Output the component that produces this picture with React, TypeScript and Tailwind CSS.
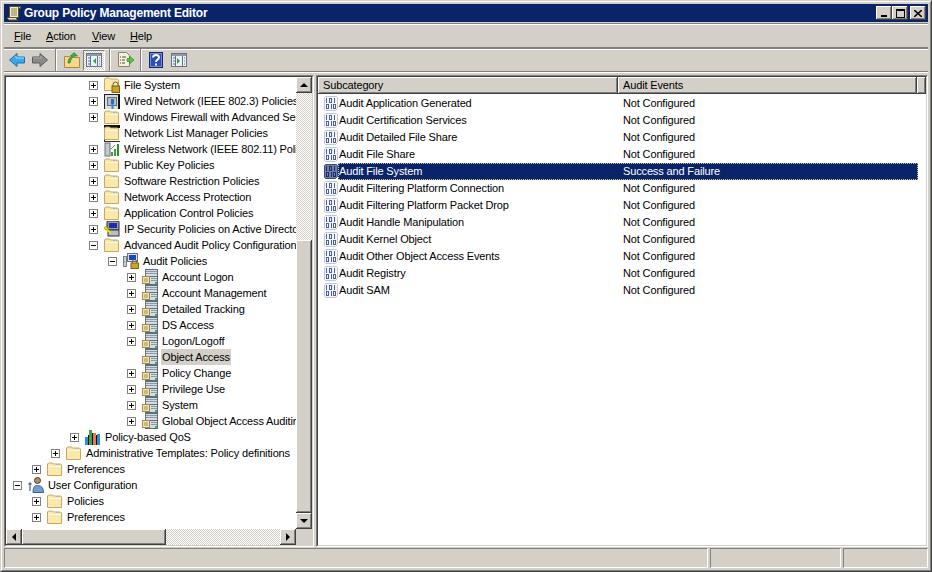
import React from "react";

const raised =
  "shadow-[inset_-1px_-1px_0_#404040,inset_1px_1px_0_#ffffff,inset_-2px_-2px_0_#808080]";
const checker =
  "bg-[repeating-conic-gradient(#d4d0c8_0_25%,#ffffff_0_50%)] bg-[length:2px_2px]";

const Folder = () => (
  <svg width="16" height="16" viewBox="0 0 16 16" className="shrink-0">
    <path d="M0.5 14.5V3l1-1h4l1 1h7l1 1v10.5z" fill="#fbe9ac" stroke="#c8a860" />
    <path d="M1.5 5.5h12.5" stroke="#fff8da" />
    <path d="M9 3h4v1H9z" fill="#9fc0d8" />
  </svg>
);

const LockFolder = () => (
  <svg width="16" height="16" viewBox="0 0 16 16" className="shrink-0">
    <path d="M0.5 13.5V2l1-1h4l1 1h7l1 1v10.5z" fill="#fbe9ac" stroke="#c8a860" />
    <path d="M9 9V7.5a2.5 2.5 0 0 1 5 0V9" fill="none" stroke="#6b5a20" />
    <rect x="8" y="9" width="7.5" height="6.5" fill="#c9a227" stroke="#7a6210" />
  </svg>
);

const BlackFolder = () => (
  <svg width="16" height="16" viewBox="0 0 16 16" className="shrink-0">
    <path d="M0 0h16v3H1v13H0z" fill="#111" />
    <path d="M0.5 14.5V3l1-1h4l1 1h7l1 1v10.5z" fill="#fbe9ac" stroke="#c8a860" />
    <path d="M1.5 5.5h12.5" stroke="#fff8da" />
  </svg>
);

const Wired = () => (
  <svg width="16" height="16" viewBox="0 0 16 16" className="shrink-0">
    <rect x="0" y="1" width="16" height="15" fill="#d8dde2" />
    <path d="M0 1h16v1H1v14H0z" fill="#222" />
    <path d="M14 2h2v14h-2z" fill="#111" />
    <rect x="3.5" y="4.5" width="9" height="8" fill="#b4bcc4" stroke="#6a7078" />
    <rect x="7" y="6" width="3" height="5" fill="#2a6fb5" />
    <path d="M8.5 11v5" stroke="#3d86c8" strokeWidth="2" />
  </svg>
);

const Wireless = () => (
  <svg width="16" height="16" viewBox="0 0 16 16" className="shrink-0">
    <rect x="1" y="2" width="5" height="13" fill="#c3cbd2" stroke="#6a7078" />
    <path d="M0 0h16v1H0z" fill="#333" />
    <rect x="7" y="11" width="2" height="4" fill="#3aa23a" />
    <rect x="10" y="8" width="2" height="7" fill="#3aa23a" />
    <rect x="13" y="3" width="2" height="12" fill="#2f8f2f" />
    <path d="M7 8l4-4" stroke="#7a7a7a" />
  </svg>
);

const Ipsec = () => (
  <svg width="16" height="16" viewBox="0 0 16 16" className="shrink-0">
    <rect x="3" y="0" width="12" height="9" rx="1" fill="#9aa0a8" stroke="#222" />
    <rect x="5" y="2" width="8" height="5" fill="#1c2bb0" />
    <rect x="4" y="9" width="11" height="6" fill="#b9bec4" stroke="#333" />
    <path d="M1 7l6 5" stroke="#f2e200" strokeWidth="2" />
    <circle cx="2" cy="7" r="1.6" fill="#f2e200" stroke="#8a7f00" strokeWidth=".5" />
  </svg>
);

const AuditPolicies = () => (
  <svg width="16" height="16" viewBox="0 0 16 16" className="shrink-0">
    <rect x="0.5" y="3.5" width="3" height="10" fill="#c9ced4" stroke="#7c828a" />
    <rect x="1" y="8" width="1" height="1" fill="#2fc22f" />
    <rect x="4.5" y="0.5" width="10" height="8" fill="#dfe3e8" stroke="#6a7078" />
    <rect x="6" y="2" width="7" height="5" fill="#1546c8" />
    <path d="M9.5 10V8.5a2 2 0 0 1 4 0V10" fill="none" stroke="#6b5a20" />
    <rect x="8" y="10" width="7.5" height="5.5" fill="#cda52a" stroke="#7a6210" />
  </svg>
);

const Servers = () => (
  <svg width="16" height="16" viewBox="0 0 16 16" className="shrink-0">
    <rect x="3.5" y="0.5" width="12" height="7" fill="#d3dbe5" stroke="#5f6c7a" />
    <rect x="3.5" y="7.5" width="12" height="8" fill="#d3dbe5" stroke="#5f6c7a" />
    <path d="M4 2.5h11M4 4.5h11M9 9.500h6M9 11.500h6" stroke="#8b98a8" />
    <rect x="13" y="13" width="2" height="2" fill="#2fc22f" />
    <rect x="0.5" y="7.5" width="7" height="7" fill="#f5e3ac" stroke="#a08a50" />
    <path d="M2 10h4M2 12h4" stroke="#a08a50" />
  </svg>
);

const Qos = () => (
  <svg width="16" height="16" viewBox="0 0 16 16" className="shrink-0">
    <rect x="0" y="8" width="3" height="8" fill="#2a8fe0" />
    <rect x="3" y="6" width="1" height="10" fill="#111" />
    <rect x="4" y="1" width="3" height="15" fill="#37a84a" />
    <rect x="7" y="4" width="1" height="12" fill="#111" />
    <rect x="8" y="4" width="3" height="12" fill="#f0764a" />
    <rect x="11" y="6" width="1" height="10" fill="#111" />
    <rect x="12" y="5" width="3" height="11" fill="#2a8fe0" />
  </svg>
);

const UserCfg = () => (
  <svg width="16" height="16" viewBox="0 0 16 16" className="shrink-0">
    <circle cx="9.5" cy="3.5" r="3" fill="#b98a60" stroke="#4a3a2a" />
    <path d="M5 15.5c0-6 2-7 4.500-7s6 1 6 7z" fill="#6f9fd2" stroke="#3a5f8a" />
    <path d="M2 6v8M0.5 7.5L2 6l1.5 1.5" fill="none" stroke="#5a6f8a" strokeWidth="1.3" />
  </svg>
);

const BinDoc = ({ selected }: { selected?: boolean }) => (
  <svg width="14" height="16" viewBox="0 0 14 16" className="shrink-0">
    <path
      d="M1.5 0.5h11l1 1v11l-2 2h-10l-1-1v-12z"
      fill={selected ? "#6f7fa8" : "#f6f7fb"}
      stroke={selected ? "#3a4a7a" : "#c0c6d4"}
    />
    <g fill={selected ? "#1a2a6a" : "#4a5cb0"}>
      <rect x="2" y="2" width="1" height="5" />
      <rect x="5" y="2" width="3" height="5" />
      <rect x="10" y="2" width="1" height="5" />
      <rect x="2" y="8" width="3" height="5" />
      <rect x="7" y="8" width="1" height="5" />
      <rect x="9" y="8" width="3" height="5" />
    </g>
    <g fill={selected ? "#6f7fa8" : "#f6f7fb"}>
      <rect x="6" y="3" width="1" height="3" />
      <rect x="3" y="9" width="1" height="3" />
      <rect x="10" y="9" width="1" height="3" />
    </g>
  </svg>
);

const icons: Record<string, React.ReactNode> = {
  folder: <Folder />,
  lock: <LockFolder />,
  black: <BlackFolder />,
  wired: <Wired />,
  wireless: <Wireless />,
  ipsec: <Ipsec />,
  audit: <AuditPolicies />,
  servers: <Servers />,
  qos: <Qos />,
  user: <UserCfg />,
};

type Row = { label: string; depth: number; icon: string; box?: "+" | "-"; hl?: boolean };

const tree: Row[] = [
  { label: "File System", depth: 4, icon: "lock", box: "+" },
  { label: "Wired Network (IEEE 802.3) Policies", depth: 4, icon: "wired", box: "+" },
  { label: "Windows Firewall with Advanced Security", depth: 4, icon: "folder", box: "+" },
  { label: "Network List Manager Policies", depth: 4, icon: "black" },
  { label: "Wireless Network (IEEE 802.11) Policies", depth: 4, icon: "wireless", box: "+" },
  { label: "Public Key Policies", depth: 4, icon: "folder", box: "+" },
  { label: "Software Restriction Policies", depth: 4, icon: "folder", box: "+" },
  { label: "Network Access Protection", depth: 4, icon: "folder", box: "+" },
  { label: "Application Control Policies", depth: 4, icon: "folder", box: "+" },
  { label: "IP Security Policies on Active Directory", depth: 4, icon: "ipsec", box: "+" },
  { label: "Advanced Audit Policy Configuration", depth: 4, icon: "folder", box: "-" },
  { label: "Audit Policies", depth: 5, icon: "audit", box: "-" },
  { label: "Account Logon", depth: 6, icon: "servers", box: "+" },
  { label: "Account Management", depth: 6, icon: "servers", box: "+" },
  { label: "Detailed Tracking", depth: 6, icon: "servers", box: "+" },
  { label: "DS Access", depth: 6, icon: "servers", box: "+" },
  { label: "Logon/Logoff", depth: 6, icon: "servers", box: "+" },
  { label: "Object Access", depth: 6, icon: "servers", hl: true },
  { label: "Policy Change", depth: 6, icon: "servers", box: "+" },
  { label: "Privilege Use", depth: 6, icon: "servers", box: "+" },
  { label: "System", depth: 6, icon: "servers", box: "+" },
  { label: "Global Object Access Auditing", depth: 6, icon: "servers", box: "+" },
  { label: "Policy-based QoS", depth: 3, icon: "qos", box: "+" },
  { label: "Administrative Templates: Policy definitions", depth: 2, icon: "folder", box: "+" },
  { label: "Preferences", depth: 1, icon: "folder", box: "+" },
  { label: "User Configuration", depth: 0, icon: "user", box: "-" },
  { label: "Policies", depth: 1, icon: "folder", box: "+" },
  { label: "Preferences", depth: 1, icon: "folder", box: "+" },
];

const audits: [string, string][] = [
  ["Audit Application Generated", "Not Configured"],
  ["Audit Certification Services", "Not Configured"],
  ["Audit Detailed File Share", "Not Configured"],
  ["Audit File Share", "Not Configured"],
  ["Audit File System", "Success and Failure"],
  ["Audit Filtering Platform Connection", "Not Configured"],
  ["Audit Filtering Platform Packet Drop", "Not Configured"],
  ["Audit Handle Manipulation", "Not Configured"],
  ["Audit Kernel Object", "Not Configured"],
  ["Audit Other Object Access Events", "Not Configured"],
  ["Audit Registry", "Not Configured"],
  ["Audit SAM", "Not Configured"],
];

const Expander = ({ kind }: { kind: "+" | "-" }) => (
  <div className="relative h-[9px] w-[9px] border border-[#808080] bg-white">
    <div className="absolute left-[1px] top-[3px] h-px w-[5px] bg-black" />
    {kind === "+" && <div className="absolute left-[3px] top-[1px] h-[5px] w-px bg-black" />}
  </div>
);

const TreeRow = ({ row }: { row: Row }) => (
  <div
    className="flex h-4 w-max items-center whitespace-nowrap"
    style={{ paddingLeft: 7 + row.depth * 19 }}
  >
    <div className="w-[15px] shrink-0">{row.box && <Expander kind={row.box} />}</div>
    <div className="w-[19px] shrink-0">{icons[row.icon]}</div>
    <span className={`flex h-4 items-center px-[1px] ${row.hl ? "bg-[#d4d0c8]" : ""}`}>
      {row.label}
    </span>
  </div>
);

const Arrow = ({ dir }: { dir: "up" | "down" | "left" | "right" }) => {
  const d = {
    up: "M4 0L0 4h8z",
    down: "M0 0h8L4 4z",
    left: "M4 0v8L0 4z",
    right: "M0 0v8l4-4z",
  }[dir];
  const vertical = dir === "up" || dir === "down";
  return (
    <svg width={vertical ? 8 : 4} height={vertical ? 4 : 8} viewBox={vertical ? "0 0 8 4" : "0 0 4 8"}>
      <path d={d} fill="#000" />
    </svg>
  );
};

const ScrollBtn = ({ dir }: { dir: "up" | "down" | "left" | "right" }) => (
  <div className={`flex h-[16px] w-[16px] shrink-0 items-center justify-center bg-[#d4d0c8] ${raised}`}>
    <Arrow dir={dir} />
  </div>
);

const CaptionBtn = ({ children, className = "" }: { children: React.ReactNode; className?: string }) => (
  <div className={`flex h-[14px] w-[16px] items-center justify-center bg-[#d4d0c8] ${raised} ${className}`}>
    {children}
  </div>
);

const Sep = () => <div className="mx-[3px] h-[22px] w-[2px] border-l border-r border-l-[#808080] border-r-white" />;

const TitleIcon = () => (
  <svg width="16" height="16" viewBox="0 0 16 16">
    <path d="M3.5 1.5h9v11h-9z" fill="#f4ecc8" stroke="#5a5130" />
    <path d="M1.5 12.5h9c0 1 0 2 1 2.5h-8c-1 0-2-1-2-2.5z" fill="#efe3b4" stroke="#5a5130" />
    <path d="M5 4h6M5 6h6M5 8h6M5 10h6" stroke="#8a7d4a" />
    <path d="M12.5 1.5h2v2h-2z" fill="#d8cd9c" stroke="#5a5130" />
  </svg>
);

const BackIcon = () => (
  <svg width="16" height="16" viewBox="0 0 16 16">
    <path d="M8 1.5L0.5 8 8 14.5V11h7.5V5H8z" fill="#36a8ee" stroke="#1f6fb5" />
    <path d="M7 4v2h8" fill="none" stroke="#a8e0ff" />
  </svg>
);

const ForwardIcon = () => (
  <svg width="16" height="16" viewBox="0 0 16 16">
    <path d="M8 1.5L15.5 8 8 14.5V11H0.5V5H8z" fill="#8a8a8a" stroke="#5c5c5c" />
    <path d="M1 6h8V4" fill="none" stroke="#b0b0b0" />
  </svg>
);

const UpIcon = () => (
  <svg width="16" height="16" viewBox="0 0 16 16">
    <path d="M0.5 15.5V4.5h5l1 1h9v10z" fill="#f5d98a" stroke="#b08a3a" />
    <path d="M4 11c0-4 2-6 4-7H6.5L10 0.5 13.5 4H11c-3 1-4 3-5 7z" fill="#3fae3f" stroke="#1f7a1f" strokeWidth=".6" />
  </svg>
);

const PaneIcon = ({ side }: { side: "left" | "right" }) => (
  <svg width="16" height="14" viewBox="0 0 16 14">
    <rect x="0.5" y="0.5" width="15" height="13" fill="#eef1f4" stroke="#6a7480" />
    <rect x="1" y="1" width="14" height="2" fill="#8e9aa8" />
    <path d="M4.5 3v10M11.5 3v10" stroke="#6a7480" />
    <path d="M2 5h2M2 8h2M2 11h2M13 5h1M13 8h1M13 11h1" stroke="#3a6fc0" />
    {side === "left" ? <path d="M10 5v6L7 8z" fill="#2f9f4f" /> : <path d="M6 5v6l3-3z" fill="#2f9f4f" />}
  </svg>
);

const ExportIcon = () => (
  <svg width="17" height="16" viewBox="0 0 17 16">
    <path d="M1.5 0.5h8l3 3v11h-11z" fill="#f7f2dc" stroke="#8a8266" />
    <path d="M3 5h1M5 5h4M3 8h1M5 8h3M3 11h1M5 11h3" stroke="#4a4a4a" />
    <path d="M10 6.5h2.500V4l4.500 4-4.500 4V9.500H10z" fill="#55c23f" stroke="#2f8a22" strokeWidth=".6" />
  </svg>
);

const HelpIcon = () => (
  <svg width="14" height="16" viewBox="0 0 14 16">
    <rect x="0.5" y="0.5" width="13" height="15" fill="#2d4fb5" stroke="#16286a" />
    <rect x="1.5" y="1.5" width="11" height="13" fill="none" stroke="#6f8fe0" />
    <path d="M4 5.5c0-3.500 6-3.500 6 0 0 2-3 2-3 4.500" fill="none" stroke="#fff" strokeWidth="2" />
    <rect x="6" y="11.5" width="2" height="2" fill="#fff" />
  </svg>
);

const BarPanel = ({ children, className = "" }: { children: React.ReactNode; className?: string }) => (
  <div className={`flex items-center border-t border-t-[#808080] border-b border-b-[#808080] shadow-[inset_0_1px_0_#ffffff,0_1px_0_#ffffff] ${className}`}>
    {children}
  </div>
);

export default function App() {
  return (
    <div className="flex h-[572px] w-[932px] flex-col overflow-hidden border-b border-r border-b-[#404040] border-r-[#404040] border-l border-t border-l-[#d4d0c8] border-t-[#d4d0c8] bg-[#d4d0c8] font-['Liberation_Sans',sans-serif] text-[11px] leading-none tracking-[-0.14px] text-black">
      <div className="flex min-h-0 flex-1 flex-col border-b border-r border-b-[#808080] border-r-[#808080] border-l border-t border-l-white border-t-white p-[2px]">
        {/* title bar */}
        <div className="flex h-[18px] shrink-0 items-center bg-[#0a246a] pl-[2px] pr-[2px]">
          <TitleIcon />
          <span className="ml-[2px] text-[12px] font-bold tracking-[-0.2px] text-white">Group Policy Management Editor</span>
          <div className="ml-auto flex">
            <CaptionBtn>
              <div className="mt-[6px] h-[2px] w-[6px] bg-black" />
            </CaptionBtn>
            <CaptionBtn>
              <div className="h-[9px] w-[9px] border border-t-2 border-black" />
            </CaptionBtn>
            <CaptionBtn className="ml-[2px]">
              <svg width="8" height="7" viewBox="0 0 8 7">
                <path d="M0 0l8 7M8 0L0 7" stroke="#000" strokeWidth="1.5" />
              </svg>
            </CaptionBtn>
          </div>
        </div>

        {/* menu bar */}
        <BarPanel className="mt-[1px] h-[25px] shrink-0 pl-[10px] pt-[1px]">
          <span className="w-[32px]"><u>F</u>ile</span>
          <span className="w-[46px]"><u>A</u>ction</span>
          <span className="w-[38px]"><u>V</u>iew</span>
          <span><u>H</u>elp</span>
        </BarPanel>

        {/* toolbar */}
        <BarPanel className="h-[24px] shrink-0 pl-[5px]">
          <BackIcon />
          <div className="w-[7px]" />
          <ForwardIcon />
          <div className="w-[4px]" />
          <Sep />
          <div className="w-[4px]" />
          <UpIcon />
          <div className="w-[3px]" />
          <div className={`flex h-[21px] w-[22px] items-center justify-center border border-b-white border-l-[#808080] border-r-white border-t-[#808080] ${checker}`}>
            <PaneIcon side="left" />
          </div>
          <div className="w-[1px]" />
          <Sep />
          <div className="w-[3px]" />
          <ExportIcon />
          <div className="w-[3px]" />
          <Sep />
          <div className="w-[4px]" />
          <HelpIcon />
          <div className="w-[8px]" />
          <PaneIcon side="right" />
        </BarPanel>

        {/* panes */}
        <div className="mt-[3px] flex min-h-0 flex-1">
          {/* tree pane */}
          <div className="w-[310px] shrink-0 border-b border-r border-b-white border-r-white border-l border-t border-l-[#808080] border-t-[#808080]">
            <div className="flex h-full flex-col border-b border-r border-b-[#d4d0c8] border-r-[#d4d0c8] border-l border-t border-l-[#404040] border-t-[#404040] bg-white">
              <div className="flex min-h-0 flex-1">
                <div className="min-w-0 flex-1 overflow-hidden">
                  {tree.map((row, i) => (
                    <TreeRow key={i} row={row} />
                  ))}
                </div>
                <div className="flex w-[16px] shrink-0 flex-col">
                  <ScrollBtn dir="up" />
                  <div className={`h-[147px] shrink-0 ${checker}`} />
                  <div className={`min-h-0 flex-1 bg-[#d4d0c8] ${raised}`} />
                  <ScrollBtn dir="down" />
                </div>
              </div>
              <div className="flex h-[16px] shrink-0">
                <ScrollBtn dir="left" />
                <div className={`w-[144px] shrink-0 bg-[#d4d0c8] ${raised}`} />
                <div className={`min-w-0 flex-1 ${checker}`} />
                <ScrollBtn dir="right" />
                <div className="w-[16px] shrink-0 bg-[#d4d0c8]" />
              </div>
            </div>
          </div>

          {/* list pane */}
          <div className="ml-[2px] min-w-0 flex-1 border-b border-r border-b-white border-r-white border-l border-t border-l-[#808080] border-t-[#808080]">
            <div className="h-full border-b border-r border-b-[#d4d0c8] border-r-[#d4d0c8] border-l border-t border-l-[#404040] border-t-[#404040] bg-white">
              <div className="flex h-[17px] bg-[#d4d0c8]">
                <div className={`flex w-[300px] items-center pl-[5px] ${raised}`}>Subcategory</div>
                <div className={`flex w-[299px] items-center pl-[5px] ${raised}`}>Audit Events</div>
                <div className={`min-w-0 flex-1 ${raised}`} />
              </div>
              <div className="pl-[6px] pt-[1px]">
                {audits.map(([name, value]) => {
                  const selected = value !== "Not Configured";
                  return (
                    <div key={name} className="flex h-[17px] items-center whitespace-nowrap">
                      <BinDoc selected={selected} />
                      <div
                        className={`flex h-[17px] w-[580px] items-center ${
                          selected
                            ? "border border-dotted border-[#d9c97a] bg-[#0a246a] text-white"
                            : "border border-transparent"
                        }`}
                      >
                        <span className="w-[284px]">{name}</span>
                        <span>{value}</span>
                      </div>
                    </div>
                  );
                })}
              </div>
            </div>
          </div>
        </div>

        {/* status bar */}
        <div className="mt-[1px] flex h-[20px] shrink-0 gap-[2px]">
          <div className="w-[704px] border-b border-r border-b-white border-r-white border-l border-t border-l-[#808080] border-t-[#808080]" />
          <div className="w-[131px] border-b border-r border-b-white border-r-white border-l border-t border-l-[#808080] border-t-[#808080]" />
          <div className="min-w-0 flex-1 border-b border-r border-b-white border-r-white border-l border-t border-l-[#808080] border-t-[#808080]" />
        </div>
      </div>
    </div>
  );
}
